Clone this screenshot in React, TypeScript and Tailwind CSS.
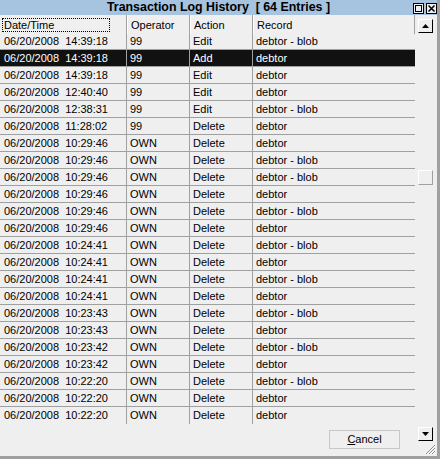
const rows: [string, string, string, string][] = [
  ["06/20/2008  14:39:18", "99", "Edit", "debtor - blob"],
  ["06/20/2008  14:39:18", "99", "Add", "debtor"],
  ["06/20/2008  14:39:18", "99", "Edit", "debtor"],
  ["06/20/2008  12:40:40", "99", "Edit", "debtor"],
  ["06/20/2008  12:38:31", "99", "Edit", "debtor - blob"],
  ["06/20/2008  11:28:02", "99", "Delete", "debtor"],
  ["06/20/2008  10:29:46", "OWN", "Delete", "debtor"],
  ["06/20/2008  10:29:46", "OWN", "Delete", "debtor - blob"],
  ["06/20/2008  10:29:46", "OWN", "Delete", "debtor - blob"],
  ["06/20/2008  10:29:46", "OWN", "Delete", "debtor"],
  ["06/20/2008  10:29:46", "OWN", "Delete", "debtor - blob"],
  ["06/20/2008  10:29:46", "OWN", "Delete", "debtor"],
  ["06/20/2008  10:24:41", "OWN", "Delete", "debtor - blob"],
  ["06/20/2008  10:24:41", "OWN", "Delete", "debtor"],
  ["06/20/2008  10:24:41", "OWN", "Delete", "debtor - blob"],
  ["06/20/2008  10:24:41", "OWN", "Delete", "debtor"],
  ["06/20/2008  10:23:43", "OWN", "Delete", "debtor - blob"],
  ["06/20/2008  10:23:43", "OWN", "Delete", "debtor"],
  ["06/20/2008  10:23:42", "OWN", "Delete", "debtor - blob"],
  ["06/20/2008  10:23:42", "OWN", "Delete", "debtor"],
  ["06/20/2008  10:22:20", "OWN", "Delete", "debtor - blob"],
  ["06/20/2008  10:22:20", "OWN", "Delete", "debtor"],
  ["06/20/2008  10:22:20", "OWN", "Delete", "debtor"],
];

const selected = 1;

const ArrowButton = ({ dir }: { dir: "up" | "down" }) => (
  <div className="flex h-[14px] w-[15px] items-center justify-center border-t border-l border-t-white border-l-white border-r border-b border-r-black border-b-black bg-[#efefef]">
    <svg width="7" height="4" viewBox="0 0 7 4">
      {dir == "up" ? (
        <polygon points="3.5,0 7,4 0,4" fill="black" />
      ) : (
        <polygon points="0,0 7,0 3.5,4" fill="black" />
      )}
    </svg>
  </div>
);

const TitleButton = ({ kind }: { kind: "max" | "close" }) => (
  <div className="flex h-[11px] w-[11px] items-center justify-center border border-black bg-[#efefef]">
    <svg width="9" height="9" viewBox="0 0 9 9">
      {kind == "max" ? (
        <rect x="1.5" y="1.5" width="6" height="6" fill="none" stroke="black" strokeWidth="1" />
      ) : (
        <path d="M1.5 1.5 L7.5 7.5 M7.5 1.5 L1.5 7.5" stroke="black" strokeWidth="1.5" />
      )}
    </svg>
  </div>
);

const App = () => {
  return (
    <div
      className="relative flex h-[459px] w-[440px] flex-col border-r-[3px] border-b-[3px] border-[#a0a0a0] bg-[#efefef] text-[11px] text-black"
      style={{ fontFamily: '"Liberation Sans", Arial, sans-serif' }}
    >
      {/* title bar */}
      <div className="relative flex h-[15px] items-center justify-center bg-[#a6c3df]">
        <span className="whitespace-pre text-[12.4px] leading-none font-bold">
          Transaction Log History  [ 64 Entries ]
        </span>
        <div className="absolute top-[3px] right-[0px] flex gap-[2px]">
          <TitleButton kind="max" />
          <TitleButton kind="close" />
        </div>
      </div>

      <div className="flex flex-1">
        {/* list + footer */}
        <div className="flex w-[415px] flex-col">
          <div className="grid h-[18px] grid-cols-[127px_63px_63px_1fr] items-stretch">
            <div className="flex items-center border-r border-[#a0a0a0] pt-[2px] pl-[2px] pr-[16px]">
              <div className="flex h-[14px] w-full items-center border border-dotted border-black pl-[1px]">
                Date/Time
              </div>
            </div>
            <div className="flex items-center border-l border-white border-r border-r-[#a0a0a0] pl-[3px] pt-[2px]">
              Operator
            </div>
            <div className="flex items-center border-l border-white border-r border-r-[#a0a0a0] pl-[3px] pt-[2px]">
              Action
            </div>
            <div className="flex items-center border-l border-white border-r border-r-[#a0a0a0] pl-[3px] pt-[2px]">
              Record
            </div>
          </div>
          {rows.map((r, i) => (
            <div
              key={i.toString()}
              className={
                "grid h-[17px] grid-cols-[127px_63px_63px_1fr] " +
                (i < rows.length - 1 ? "border-b border-[#a0a0a0] " : "") +
                (i == selected ? "bg-[#111111] text-white" : "")
              }
            >
              <div className="flex items-center whitespace-pre border-r border-[#a0a0a0] pl-[4px]">{r[0]}</div>
              <div className="flex items-center border-r border-[#a0a0a0] pl-[3px]">{r[1]}</div>
              <div className="flex items-center border-r border-[#a0a0a0] pl-[3px]">{r[2]}</div>
              <div className="flex items-center pl-[3px]">{r[3]}</div>
            </div>
          ))}
          <div className="flex flex-1 items-start justify-end pt-[6px] pr-[15px]">
            <button className="flex h-[19px] w-[71px] items-center justify-center border border-[#c8c8c8] bg-[#efefef] text-[11px]">
              <span>
                <span className="underline">C</span>ancel
              </span>
            </button>
          </div>
        </div>

        {/* scrollbar */}
        <div className="ml-[3px] flex w-[15px] flex-col pt-[4px] pb-[15px]">
          <ArrowButton dir="up" />
          <div className="mt-[137px] h-[15px] w-[15px] border-t border-l border-white border-r border-b border-r-[#a0a0a0] border-b-[#a0a0a0] bg-[#efefef]" />
          <div className="flex-1" />
          <ArrowButton dir="down" />
        </div>
      </div>

      {/* resize grip */}
      <svg className="absolute right-[1px] bottom-[1px]" width="11" height="11" viewBox="0 0 11 11">
        <path d="M10 1 L1 10 M10 4 L4 10 M10 7 L7 10" stroke="#8a8a8a" strokeWidth="1" />
        <path d="M10 2 L2 10 M10 5 L5 10 M10 8 L8 10" stroke="white" strokeWidth="1" />
      </svg>
    </div>
  );
};

export default App;
